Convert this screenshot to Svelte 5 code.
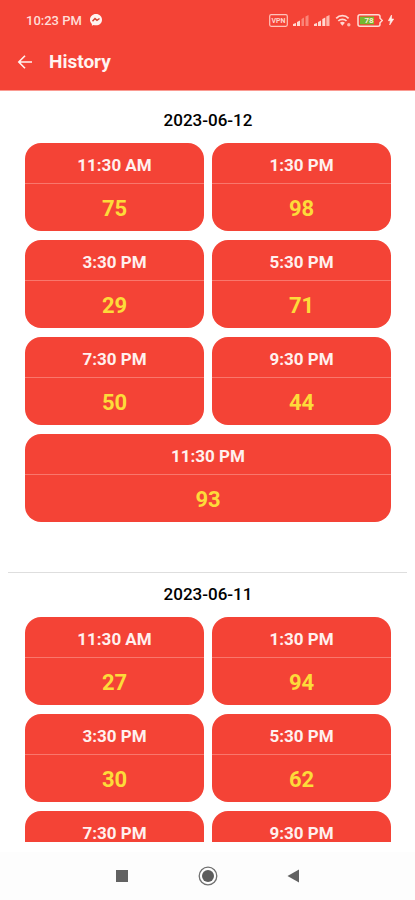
<script>
  const days = [
    {
      date: '2023-06-12',
      draws: [
        ['11:30 AM', 75],
        ['1:30 PM', 98],
        ['3:30 PM', 29],
        ['5:30 PM', 71],
        ['7:30 PM', 50],
        ['9:30 PM', 44],
        ['11:30 PM', 93]
      ]
    },
    {
      date: '2023-06-11',
      draws: [
        ['11:30 AM', 27],
        ['1:30 PM', 94],
        ['3:30 PM', 30],
        ['5:30 PM', 62],
        ['7:30 PM', ''],
        ['9:30 PM', '']
      ]
    }
  ];
</script>

<div class="screen">
  <header>
    <div class="status">
      <span class="clock">10:23 PM</span>
      <svg width="14" height="14" viewBox="0 0 14 14" aria-hidden="true">
        <path d="M7 1C3.500 1 1 3.500 1 6.700c0 1.700.7 3.200 1.900 4.200v1.800l1.700-.8c.8.300 1.600.4 2.400.4 3.500 0 6-2.400 6-5.600S10.500 1 7 1z" fill="#fff3f0" />
        <path d="M3.500 8.200 6 5.600l2 1.700 2.500-1.800" fill="none" stroke="#d8402f" stroke-width="1.500" />
      </svg>
      <div class="indicators">
        <svg width="19" height="13" viewBox="0 0 19 13" aria-label="VPN" role="img">
          <rect x=".7" y=".7" width="17.600" height="11.600" rx="1.500" fill="none" stroke="#ffc3ba" stroke-width="1.200" />
          <text x="9.500" y="9.300" text-anchor="middle" font-size="7" font-weight="700" fill="#ffd3cc">VPN</text>
        </svg>
        <svg width="16" height="12" viewBox="0 0 16 12" aria-hidden="true">
          <path d="M0 12V10l3-1v3zM4 12V8l3-1.500V12z" fill="#ffd8d1" />
          <path d="M8.500 12V5l2.500-1.500V12zM12.500 12V2.500L15.500 1v11z" fill="#fa8578" />
        </svg>
        <svg width="16" height="12" viewBox="0 0 16 12" aria-hidden="true">
          <path d="M0 12V10l3-1v3zM4 12V8l3-1.500V12zM8.300 12V5l3-1.500V12z" fill="#ffd8d1" />
          <path d="M12.300 12V2.500L15.500 1v11z" fill="#ffb5aa" />
        </svg>
        <svg class="wifi" width="17" height="13" viewBox="0 0 17 13" aria-hidden="true">
          <path d="M1.200 4.300c3.400-3.600 9-3.600 12.400 0M3.300 7c2.200-2.300 6-2.300 8.200 0" fill="none" stroke="#ffd8d1" stroke-width="1.700" />
          <path d="M4.900 8.700c1.500-1.300 3.500-1.300 5 0L7.400 11.700z" fill="#ffd8d1" />
          <circle cx="13.800" cy="10.800" r="1.700" fill="#ffb5aa" />
        </svg>
        <svg width="26" height="13" viewBox="0 0 26 13" aria-label="Battery 78" role="img">
          <path d="M3 .8h18q2 0 2 2v1.400l2.300 2.300L23 8.800v1.400q0 2-2 2H3q-2 0-2-2V2.800q0-2 2-2z" fill="#f44336" stroke="#ffdcd5" stroke-width="1.500" />
          <path d="M3 2.700h14v7.600H3z" fill="#73b92f" />
          <text x="12" y="9.300" text-anchor="middle" font-size="8" font-weight="700" fill="#ffebd8">78</text>
        </svg>
        <svg width="6" height="12" viewBox="0 0 6 12" aria-hidden="true">
          <path d="M3.500 1 .3 6.700h2.100L1.700 11 5.700 5H3.500z" fill="#fff0ec" stroke="#fff0ec" stroke-width=".6" />
        </svg>
      </div>
    </div>
    <div class="bar">
      <button class="back" aria-label="Back">
        <svg width="16" height="16" viewBox="0 0 16 16">
          <path d="M15 8H2.200M8 1.800 1.800 8 8 14.200" fill="none" stroke="#fff3f0" stroke-width="1.600" />
        </svg>
      </button>
      <h1>History</h1>
    </div>
  </header>

  <main>
    {#each days as day}
      <section>
        <h2>{day.date}</h2>
        <div class="grid">
          {#each day.draws as [time, number]}
            <article>
              <div class="time">{time}</div>
              <div class="number">{number}</div>
            </article>
          {/each}
        </div>
      </section>
    {/each}
  </main>

  <nav>
    <button aria-label="Recent apps">
      <svg width="20" height="20" viewBox="0 0 20 20"><path d="M4 4h12v12H4z" fill="#626262" /></svg>
    </button>
    <button aria-label="Home">
      <svg width="20" height="20" viewBox="0 0 20 20">
        <circle cx="10" cy="10" r="8.800" fill="none" stroke="#707070" stroke-width="1.300" />
        <circle cx="10" cy="10" r="6" fill="#5c5c5c" />
      </svg>
    </button>
    <button aria-label="Back to previous app">
      <svg width="20" height="20" viewBox="0 0 20 20"><path d="M15 3.500v13L3.500 10z" fill="#626262" /></svg>
    </button>
  </nav>
</div>

<style>
  .screen {
    display: flex;
    flex-direction: column;
    height: 100vh;
    overflow: hidden;
    background: #fff;
    font-family: Roboto, 'Noto Sans', sans-serif;
  }

  svg {
    display: block;
    flex: none;
  }

  button {
    display: flex;
    padding: 0;
    border: 0;
    background: none;
    cursor: pointer;
  }

  header {
    flex: none;
    background: #f44336;
    color: #fff3f0;
    border-bottom: 1px solid #fa9b92;
  }

  .status {
    display: flex;
    align-items: center;
    gap: 7px;
    height: 40px;
    padding: 0 21px 0 26px;
  }

  .clock {
    font-size: 13px;
    font-weight: 500;
    color: #ffded8;
  }

  .indicators {
    display: flex;
    align-items: center;
    gap: 5px;
    margin-left: auto;
  }

  .bar {
    display: flex;
    align-items: center;
    gap: 16px;
    height: 44px;
    padding: 0 17px 6px;
  }

  h1 {
    margin: 0;
    font-size: 19px;
    line-height: 24px;
    font-weight: 700;
  }

  main {
    flex: 1;
    min-height: 0;
    padding: 8px 8px 0;
    overflow-y: auto;
    scrollbar-width: none;
  }

  section {
    padding: 10px 16px 50px 17px;
  }

  section + section {
    border-top: 1px solid #dedede;
  }

  h2 {
    margin: 0 0 12px;
    font-size: 17px;
    line-height: 22px;
    font-weight: 500;
    text-align: center;
    color: #000;
  }

  .grid {
    display: grid;
    grid-template-columns: 1fr 1fr;
    gap: 9px 8px;
  }

  article {
    border-radius: 16px;
    background: #f44336;
    text-align: center;
    overflow: hidden;
  }

  article:last-child:nth-child(odd) {
    grid-column: 1 / -1;
  }

  .time {
    height: 40px;
    border-bottom: 1px solid #f9776c;
    font-size: 17px;
    line-height: 44px;
    font-weight: 700;
    color: #fff0ee;
  }

  .number {
    height: 47px;
    font-size: 22px;
    line-height: 50px;
    font-weight: 700;
    color: #fddb3a;
  }

  nav {
    flex: none;
    display: flex;
    justify-content: center;
    align-items: center;
    gap: 66px;
    height: 48px;
    margin-top: 10px;
    background: #fdfdfd;
  }
</style>
